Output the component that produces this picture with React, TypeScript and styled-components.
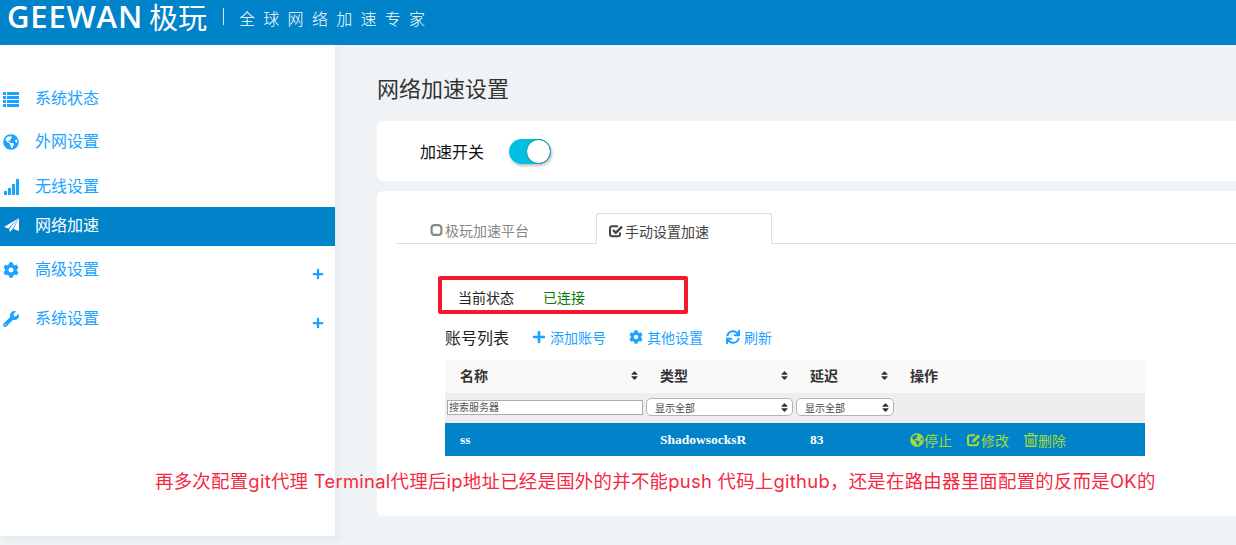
import React from 'react';
import styled, { createGlobalStyle } from 'styled-components';
import {
  FaCog,
  FaGlobeAmericas,
  FaPlus,
  FaSort,
  FaSync,
  FaWrench,
} from 'react-icons/fa';

const SANS = '"Liberation Sans", "Noto Sans CJK SC", sans-serif';
const SERIF = '"Liberation Serif", "Noto Sans CJK SC", serif';
const BLUE = '#0083c8';
const LINK = '#1aa3ff';

const GlobalStyle = createGlobalStyle`
  html, body {
    margin: 0;
    height: 545px;
    overflow: hidden;
    background: #eff3f6;
    font-family: ${SANS};
  }
`;

const Page = styled.div`
  position: relative;
  width: 1236px;
  height: 545px;
  overflow: hidden;
`;

const Header = styled.header`
  display: flex;
  align-items: flex-start;
  height: 45px;
  padding-left: 7px;
  box-sizing: border-box;
  background: ${BLUE};
  color: #fff;
`;

const LogoName = styled.div`
  font-family: "Open Sans", sans-serif;
  font-size: 31px;
  line-height: 32px;
  font-weight: 600;
  letter-spacing: 0.8px;
  white-space: nowrap;
`;

const LogoCjk = styled.div`
  margin-left: 6px;
  font-family: "Noto Sans CJK SC", sans-serif;
  font-size: 29px;
  line-height: 32px;
  font-weight: 400;
  white-space: nowrap;
`;

const LogoDivider = styled.div`
  width: 1px;
  height: 17px;
  margin: 8px 15px 0 16px;
  background: #cfe8f6;
`;

const Tagline = styled.div`
  font-size: 16px;
  line-height: 20px;
  margin-top: 10px;
  letter-spacing: 8.3px;
  font-weight: 300;
  white-space: nowrap;
`;

const Body = styled.div`
  display: flex;
  align-items: flex-start;
`;

const Sidebar = styled.nav`
  flex: 0 0 335px;
  height: 491px;
  padding-top: 33px;
  box-sizing: border-box;
  background: #fff;
  box-shadow: 3px 3px 6px rgba(200, 208, 216, 0.3);
`;

const NavItem = styled.div<{ $height: number; $active?: boolean; $top?: number }>`
  position: relative;
  display: flex;
  align-items: ${({ $top }) => ($top ? 'flex-start' : 'center')};
  height: ${({ $height }) => $height}px;
  padding-top: ${({ $top }) => $top ?? 0}px;
  box-sizing: border-box;
  background: ${({ $active }) => ($active ? BLUE : 'transparent')};
  color: ${({ $active }) => ($active ? '#fff' : LINK)};
  font-size: 16px;
  line-height: 22px;
`;

const NavIcon = styled.span`
  display: flex;
  justify-content: center;
  align-items: center;
  width: 16px;
  height: 22px;
  margin: 0 16px 0 3px;
  font-size: 16px;
`;

const NavPlus = styled.span`
  position: absolute;
  right: 11px;
  top: 22px;
  display: flex;
  font-size: 12px;
`;

const Main = styled.main`
  flex: 1;
  min-width: 0;
  padding: 29px 0 0 42px;
`;

const Title = styled.h1`
  margin: 0 0 15px;
  font-size: 22px;
  line-height: 32px;
  font-weight: 400;
  color: #333;
  font-family: ${SERIF};
`;

const Card = styled.section<{ $height: number }>`
  height: ${({ $height }) => $height}px;
  margin-bottom: 10px;
  background: #fff;
  border-radius: 6px 0 0 6px;
  box-sizing: border-box;
`;

const SwitchRow = styled.div`
  display: flex;
  align-items: center;
  height: 100%;
  padding-left: 43px;
  font-size: 16px;
  color: #111;
`;

const SwitchTrack = styled.span`
  display: flex;
  justify-content: flex-end;
  width: 42px;
  height: 25px;
  margin-left: 25px;
  border-radius: 13px;
  background: #00bfe3;
  box-shadow: 1px 2px 3px rgba(0, 0, 0, 0.25);
`;

const SwitchKnob = styled.span`
  width: 23px;
  height: 23px;
  border: 1px solid #1689a8;
  border-radius: 50%;
  background: #fff;
`;

const Tabs = styled.div`
  display: flex;
  align-items: flex-end;
  height: 53px;
  margin-left: 20px;
  border-bottom: 1px solid #ddd;
  box-sizing: border-box;
`;

const Tab = styled.div<{ $active?: boolean; $width: number; $pad: number }>`
  display: flex;
  align-items: center;
  gap: 2px;
  width: ${({ $width }) => $width}px;
  height: 31px;
  padding: 5px 0 0 ${({ $pad }) => $pad}px;
  box-sizing: border-box;
  font-size: 14px;
  color: ${({ $active }) => ($active ? '#444' : '#888')};
  background: #fff;
  ${({ $active }) => $active && `
    border: 1px solid #ddd;
    border-bottom: 1px solid #fff;
    border-radius: 3px 3px 0 0;
    margin-bottom: -1px;
  `}
`;

const Panel = styled.div`
  padding: 32px 0 0 61px;
`;

const StatusBox = styled.div`
  display: flex;
  align-items: center;
  width: 250px;
  height: 38px;
  padding: 3px 0 0 16px;
  box-sizing: border-box;
  border: 4px solid #f5192f;
  border-radius: 2px;
  font-size: 14px;
  color: #222;
`;

const StatusValue = styled.span`
  margin-left: 29px;
  color: #0a7d0a;
`;

const Toolbar = styled.div`
  display: flex;
  align-items: center;
  height: 46px;
  margin-left: 7px;
`;

const ToolbarTitle = styled.span`
  margin-right: 23px;
  font-size: 16px;
  color: #222;
`;

const ToolLink = styled.span`
  display: flex;
  align-items: center;
  gap: 4px;
  margin-right: 23px;
  font-size: 14px;
  color: ${LINK};
`;

const Table = styled.table`
  width: 700px;
  margin-left: 7px;
  border-collapse: collapse;
  table-layout: fixed;
`;

const HeadCell = styled.th<{ $width: number }>`
  width: ${({ $width }) => $width}px;
  height: 33px;
  padding: 0 5px 3px 15px;
  box-sizing: border-box;
  background: #f9f9f9;
  font-family: ${SERIF};
  font-size: 14px;
  font-weight: 700;
  text-align: left;
  color: #333;
`;

const HeadInner = styled.div`
  display: flex;
  justify-content: space-between;
  align-items: center;
`;

const SortIcon = styled(FaSort)`
  font-size: 11px;
  color: #333;
`;

const FilterCell = styled.td`
  height: 30px;
  padding: 0 0 2px 1px;
  box-sizing: border-box;
  background: #eee;
`;

const SearchInput = styled.input`
  display: block;
  width: 196px;
  height: 15px;
  margin-left: 1px;
  padding: 0 1px;
  box-sizing: border-box;
  border: 1px solid #aaa;
  background: #fff;
  font-family: ${SANS};
  font-size: 10px;
  &::placeholder {
    color: #555;
    opacity: 1;
  }
`;

const FilterSelect = styled.div<{ $width: number }>`
  display: flex;
  justify-content: space-between;
  align-items: center;
  width: ${({ $width }) => $width}px;
  height: 18px;
  padding: 0 2px 0 8px;
  box-sizing: border-box;
  border: 1px solid #b4b4b4;
  border-radius: 5px;
  background: #fff;
  font-size: 10px;
  color: #444;
`;

const RowCell = styled.td`
  height: 33px;
  padding: 0 0 0 15px;
  box-sizing: border-box;
  background: ${BLUE};
  font-family: ${SERIF};
  font-size: 13.5px;
  font-weight: 700;
  color: #fff;
`;

const Actions = styled.div`
  display: flex;
  gap: 15px;
`;

const Action = styled.span`
  display: flex;
  align-items: center;
  font-family: ${SANS};
  font-size: 14px;
  font-weight: 400;
  color: #a5d839;
`;

const Annotation = styled.div`
  position: absolute;
  left: 155px;
  top: 469px;
  font-family: Inter, "Noto Sans CJK SC", sans-serif;
  font-size: 18.4px;
  letter-spacing: 0.28px;
  line-height: 24px;
  color: #f5293f;
  white-space: nowrap;
`;

const PlaneSvg = styled.svg`
  margin-top: -3px;
`;

const ListIcon = () => (
  <svg width="16" height="15" viewBox="0 0 16 15" fill="currentColor">
    {[0, 4, 8, 12].map((y) => (
      <g key={y}>
        <rect x="0" y={y} width="3" height="3" />
        <rect x="4" y={y} width="12" height="3" />
      </g>
    ))}
  </svg>
);

const SignalIcon = () => (
  <svg width="15" height="16" viewBox="0 0 15 16" fill="currentColor">
    <rect x="0" y="12" width="3" height="4" />
    <rect x="4" y="9" width="3" height="7" />
    <rect x="8" y="5" width="3" height="11" />
    <rect x="12" y="0" width="3" height="16" />
  </svg>
);

const PlaneIcon = () => (
  <PlaneSvg width="15" height="14" viewBox="0 0 15 14" fill="currentColor">
    <path d="M15 0L0 9l4.2 1.6z" />
    <path d="M15 0L5.2 10.8 6 14l2.2-2.4z" />
    <path d="M15 0v13l-5.6-2z" />
  </PlaneSvg>
);

const EmptyBoxIcon = () => (
  <svg width="13" height="14" viewBox="0 0 13 14" fill="none" stroke="currentColor" strokeWidth="2.2">
    <rect x="1.6" y="2.1" width="9.8" height="9.8" rx="3" />
  </svg>
);

const CheckBoxIcon = () => (
  <svg width="14" height="14" viewBox="0 0 14 14" fill="none" stroke="currentColor" strokeWidth="2">
    <path d="M11 8.5v1.7a2 2 0 0 1-2 2H3a2 2 0 0 1-2-2V4.2a2 2 0 0 1 2-2h6" />
    <path d="M4 6l2.8 2.8L13 2.6" strokeWidth="2.4" />
  </svg>
);

const EditIcon = () => (
  <svg width="14" height="14" viewBox="0 0 14 14" fill="none" stroke="currentColor" strokeWidth="2">
    <path d="M11 8.5v1.7a2 2 0 0 1-2 2H3a2 2 0 0 1-2-2V4.2a2 2 0 0 1 2-2h5" />
    <path d="M5 9.5l.6-2.6L11 1.5l2 2-5.4 5.4z" fill="currentColor" stroke="none" />
  </svg>
);

const TrashIcon = () => (
  <svg width="14" height="16" viewBox="0 0 14 16" fill="currentColor">
    <rect x="0" y="3" width="14" height="1.4" />
    <path d="M4.5 3V1h5v2H8.3V2.1H5.7V3z" />
    <path d="M1.5 4h1.3v9.5h8.4V4h1.3v11h-11z" />
    <rect x="4.3" y="6" width="1.2" height="6.5" />
    <rect x="6.4" y="6" width="1.2" height="6.5" />
    <rect x="8.5" y="6" width="1.2" height="6.5" />
  </svg>
);

const navItems = [
  { label: '系统状态', icon: <ListIcon />, height: 42 },
  { label: '外网设置', icon: <FaGlobeAmericas />, height: 43 },
  { label: '无线设置', icon: <SignalIcon />, height: 44, top: 13 },
  { label: '网络加速', icon: <PlaneIcon />, height: 39, active: true, top: 8 },
  { label: '高级设置', icon: <FaCog />, height: 49, top: 13, plus: true },
  { label: '系统设置', icon: <FaWrench />, height: 49, top: 13, plus: true },
];

const App = () => (
  <Page>
    <GlobalStyle />
    <Header>
      <LogoName>GEEWAN</LogoName>
      <LogoCjk>极玩</LogoCjk>
      <LogoDivider />
      <Tagline>全球网络加速专家</Tagline>
    </Header>
    <Body>
      <Sidebar>
        {navItems.map((item) => (
          <NavItem key={item.label} $height={item.height} $active={item.active} $top={item.top}>
            <NavIcon>{item.icon}</NavIcon>
            {item.label}
            {item.plus && <NavPlus><FaPlus /></NavPlus>}
          </NavItem>
        ))}
      </Sidebar>
      <Main>
        <Title>网络加速设置</Title>
        <Card $height={60}>
          <SwitchRow>
            加速开关
            <SwitchTrack><SwitchKnob /></SwitchTrack>
          </SwitchRow>
        </Card>
        <Card $height={325}>
          <Tabs>
            <Tab $width={199} $pad={33}><EmptyBoxIcon />极玩加速平台</Tab>
            <Tab $width={176} $pad={12} $active><CheckBoxIcon />手动设置加速</Tab>
          </Tabs>
          <Panel>
            <StatusBox>
              当前状态
              <StatusValue>已连接</StatusValue>
            </StatusBox>
            <Toolbar>
              <ToolbarTitle>账号列表</ToolbarTitle>
              <ToolLink><FaPlus />添加账号</ToolLink>
              <ToolLink><FaCog />其他设置</ToolLink>
              <ToolLink><FaSync />刷新</ToolLink>
            </Toolbar>
            <Table>
              <thead>
                <tr>
                  <HeadCell $width={200}><HeadInner>名称<SortIcon /></HeadInner></HeadCell>
                  <HeadCell $width={150}><HeadInner>类型<SortIcon /></HeadInner></HeadCell>
                  <HeadCell $width={100}><HeadInner>延迟<SortIcon /></HeadInner></HeadCell>
                  <HeadCell $width={250}>操作</HeadCell>
                </tr>
              </thead>
              <tbody>
                <tr>
                  <FilterCell><SearchInput placeholder="搜索服务器" /></FilterCell>
                  <FilterCell><FilterSelect $width={147}>显示全部<SortIcon /></FilterSelect></FilterCell>
                  <FilterCell><FilterSelect $width={98}>显示全部<SortIcon /></FilterSelect></FilterCell>
                  <FilterCell />
                </tr>
                <tr>
                  <RowCell>ss</RowCell>
                  <RowCell>ShadowsocksR</RowCell>
                  <RowCell>83</RowCell>
                  <RowCell>
                    <Actions>
                      <Action><FaGlobeAmericas />停止</Action>
                      <Action><EditIcon />修改</Action>
                      <Action><TrashIcon />删除</Action>
                    </Actions>
                  </RowCell>
                </tr>
              </tbody>
            </Table>
          </Panel>
        </Card>
      </Main>
    </Body>
    <Annotation>再多次配置git代理 Terminal代理后ip地址已经是国外的并不能push 代码上github，还是在路由器里面配置的反而是OK的</Annotation>
  </Page>
);

export default App;
